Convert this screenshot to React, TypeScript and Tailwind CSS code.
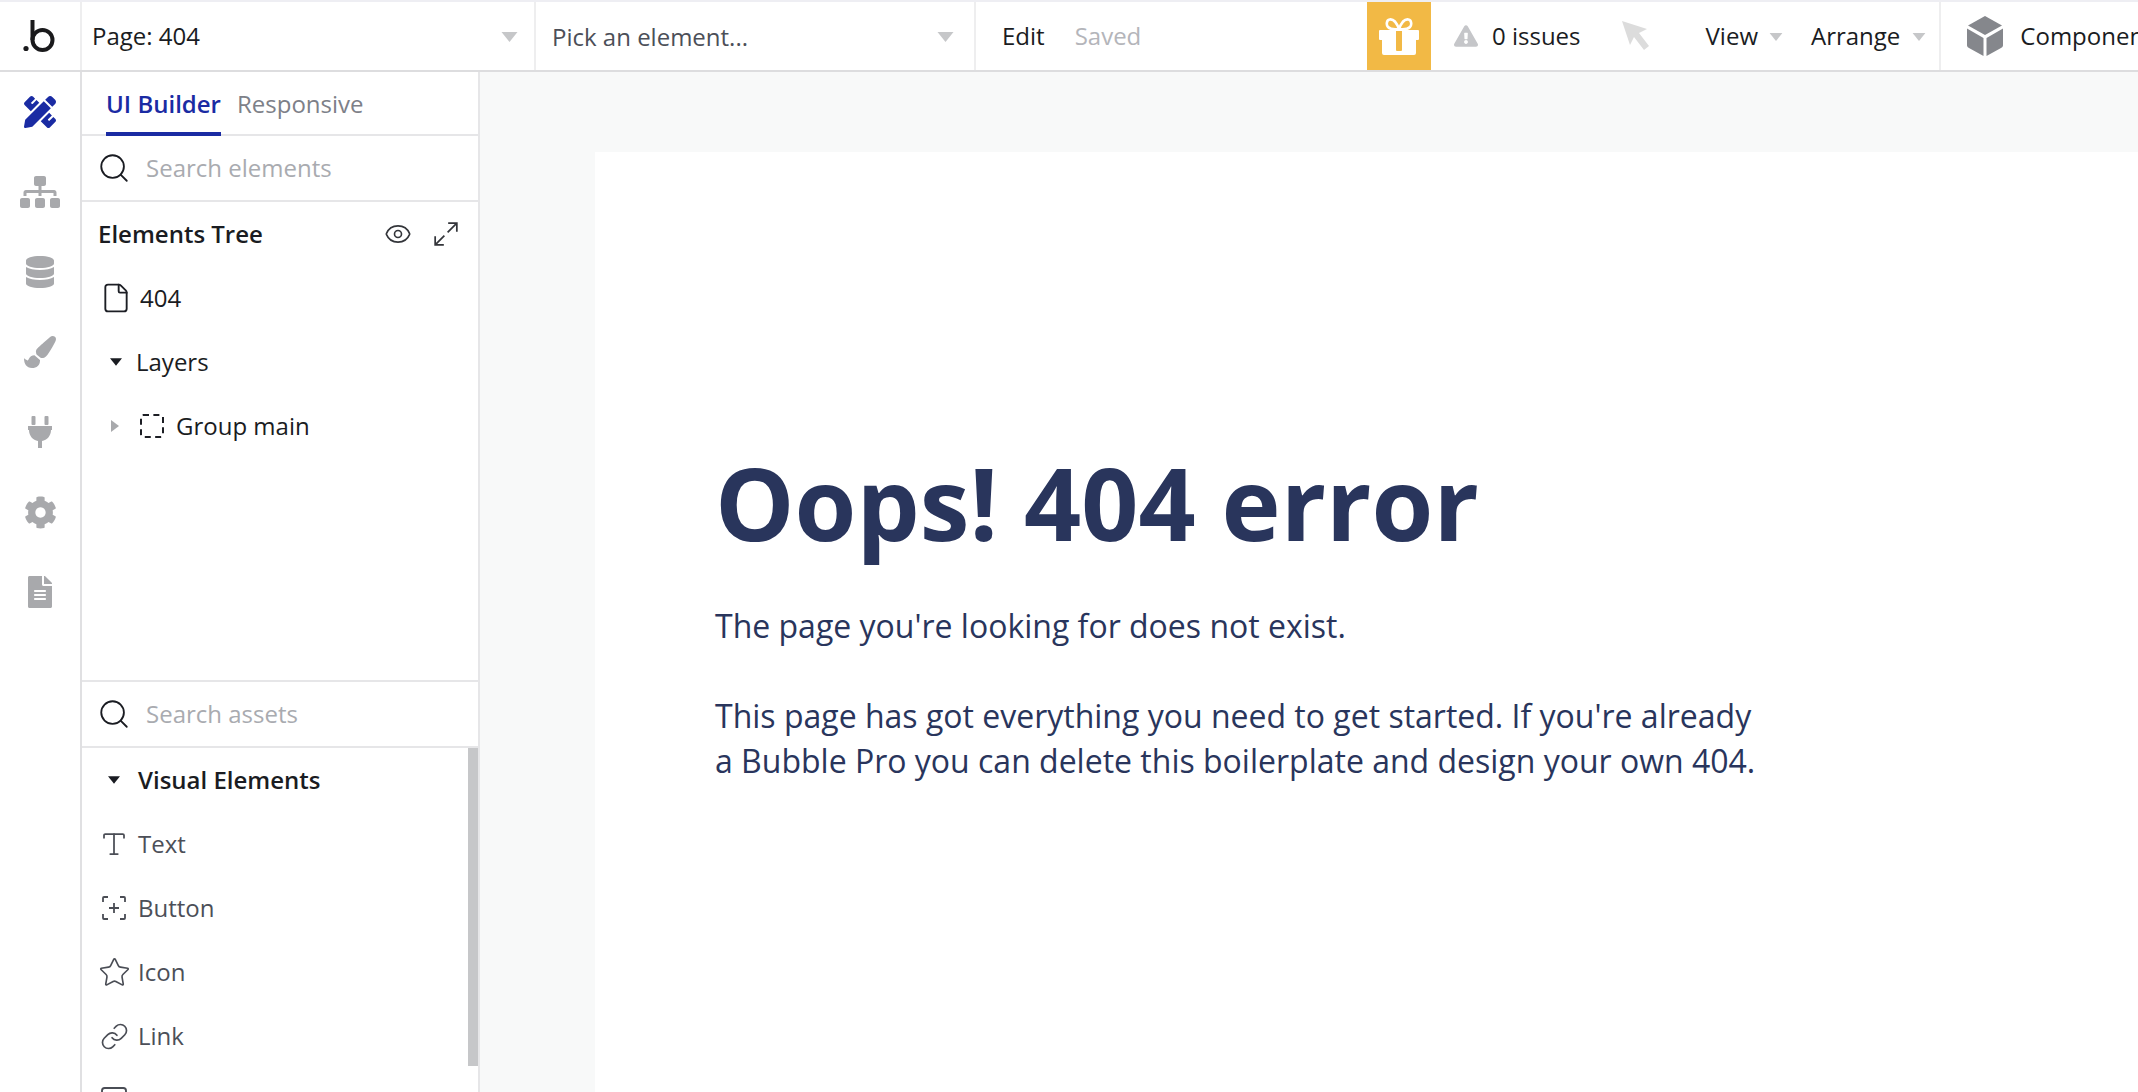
import React from "react";
import { FaPencilRuler, FaSitemap, FaDatabase, FaPaintBrush, FaCog, FaFileAlt, FaExclamationTriangle } from "react-icons/fa";
import { Search, Eye, File, Type, Star, Link, Image } from "lucide-react";

function Caret({ className }: { className: string }) {
  return (
    <svg viewBox="0 0 16 10" className={`${className} shrink-0`} fill="currentColor">
      <path d="M0 0h16L8 10z" />
    </svg>
  );
}

function Logo() {
  return (
    <svg viewBox="0 0 32 34" className="w-[32px] h-[34px]" fill="none">
      <circle cx="3" cy="29.5" r="2.6" fill="#1a1a1c" />
      <path d="M9.5 1v20" stroke="#1a1a1c" strokeWidth="4" />
      <circle cx="19.5" cy="21" r="10" stroke="#1a1a1c" strokeWidth="4" />
    </svg>
  );
}

function Gift() {
  return (
    <svg viewBox="0 0 40 37" className="w-[40px] h-[37px] shrink-0">
      <path d="M20 11C17 3 13 1 10.500 1.500 7.500 2 7 7 9 9c2 2 7 2.500 11 2zm0 0c3-8 7-10 9.500-9.500C32.500 2 33 7 31 9c-2 2-7 2.500-11 2z" fill="none" stroke="#fff" strokeWidth="2.600" />
      <path d="M1 12h38a1 1 0 0 1 1 1v8a1 1 0 0 1-1 1h-2v13a2 2 0 0 1-2 2H5a2 2 0 0 1-2-2V22H1a1 1 0 0 1-1-1v-8a1 1 0 0 1 1-1z" fill="#fff" />
      <path d="M17 13h6v19a1 1 0 0 1-1 1h-4a1 1 0 0 1-1-1z" fill="#f2b945" />
    </svg>
  );
}

function Plug() {
  return (
    <svg viewBox="0 0 24 32" className="w-[24px] h-[32px]" fill="#a8a9ac">
      <rect x="3.500" y="0" width="4" height="9" rx="1" />
      <rect x="16.500" y="0" width="4" height="9" rx="1" />
      <path d="M0 10h24v4h-1c0 6-4 10-9 11v7h-4v-7C5 24 1 20 1 14H0z" />
    </svg>
  );
}

function Cube() {
  return (
    <svg viewBox="0 0 36 40" className="w-[36px] h-[40px] shrink-0" fill="#85878c">
      <path d="M18 0 35 9.500 18 19 1 9.500z" />
      <path d="M0 12.500 16.500 22v18L2 32a3 3 0 0 1-2-3z" />
      <path d="M36 12.500 19.500 22v18L34 32a3 3 0 0 0 2-3z" />
    </svg>
  );
}

function Pointer() {
  return (
    <svg viewBox="0 0 28 30" className="w-[28px] h-[30px] shrink-0" fill="#dcdcdc">
      <path d="M0 0 25 8 17 12 27 25 22 29 12 16 8 24z" />
    </svg>
  );
}

function Expand() {
  return (
    <svg viewBox="0 0 24 24" className="w-[26px] h-[26px] shrink-0" fill="none" stroke="#33353a" strokeWidth="1.600">
      <path d="M14 2h8v8M22 2 13.500 10.500M10 22H2v-8M2 22l8.500-8.500" />
    </svg>
  );
}

function DashedSquare() {
  return <div className="w-[24px] h-[24px] rounded-[3px] border-2 border-dashed border-[#1c1e24]" />;
}

function ButtonIcon() {
  return (
    <svg viewBox="0 0 24 24" className="w-[24px] h-[24px] shrink-0" fill="none" stroke="#4a4d55" strokeWidth="1.800">
      <path d="M1 6V2a1 1 0 0 1 1-1h4M18 1h4a1 1 0 0 1 1 1v4M23 18v4a1 1 0 0 1-1 1h-4M6 23H2a1 1 0 0 1-1-1v-4M12 7v10M7 12h10" />
    </svg>
  );
}

const railIcons = [
  <FaPencilRuler className="text-[#1a2ba3] w-[32px] h-[32px]" />,
  <FaSitemap className="text-[#a8a9ac] w-[40px] h-[32px]" />,
  <FaDatabase className="text-[#a8a9ac] w-[28px] h-[32px]" />,
  <FaPaintBrush className="text-[#a8a9ac] w-[32px] h-[32px]" />,
  <Plug />,
  <FaCog className="text-[#a8a9ac] w-[33px] h-[33px]" />,
  <FaFileAlt className="text-[#a8a9ac] w-[24px] h-[32px]" />,
];

function AssetRow({ icon, label }: { icon: React.ReactNode; label: string }) {
  return (
    <div className="h-[64px] flex items-center shrink-0">
      <div className="w-[24px] ml-[20px] flex justify-center">{icon}</div>
      <span className="ml-[12px] text-[#4c4f58]">{label}</span>
    </div>
  );
}

export default function App() {
  return (
    <div
      className="w-full h-screen overflow-hidden flex flex-col bg-white text-[24px] leading-[32px] text-[#1a1c22]"
      style={{ fontFamily: '"Open Sans", sans-serif' }}
    >
      <div className="h-[2px] bg-[#eeeef3] shrink-0" />
      <header className="h-[70px] shrink-0 flex border-b-2 border-[#dddddf] whitespace-nowrap overflow-hidden">
        <div className="w-[82px] shrink-0 border-r-2 border-[#eeeeef] flex items-center justify-center pr-[3px]">
          <Logo />
        </div>
        <div className="w-[454px] shrink-0 border-r-2 border-[#eeeeef] flex items-center pl-[10px] pr-[16px] justify-between">
          <span>Page: 404</span>
          <Caret className="w-[17px] h-[10px] text-[#c6c7c9] mt-[2px]" />
        </div>
        <div className="w-[440px] shrink-0 border-r-2 border-[#eeeeef] flex items-center pl-[16px] pr-[20px] justify-between">
          <span className="text-[#4c4f58] pt-[1px]">Pick an element...</span>
          <Caret className="w-[17px] h-[10px] text-[#c6c7c9] mt-[2px]" />
        </div>
        <div className="w-[391px] shrink-0 flex items-center pl-[26px] gap-[30px]">
          <span>Edit</span>
          <span className="text-[#b4b5ba]">Saved</span>
        </div>
        <div className="w-[64px] shrink-0 bg-[#f2b945] flex items-center justify-center">
          <Gift />
        </div>
        <div className="flex-1 min-w-0 flex items-center">
          <FaExclamationTriangle className="w-[24px] h-[24px] shrink-0 text-[#c5c6c9] ml-[23px]" />
          <span className="ml-[14px]">0 issues</span>
          <div className="ml-[41px] shrink-0"><Pointer /></div>
          <span className="ml-[56px]">View</span>
          <Caret className="w-[14px] h-[8px] text-[#c6c7c9] ml-[11px] mt-[2px]" />
          <span className="ml-[28px]">Arrange</span>
          <Caret className="w-[14px] h-[8px] text-[#c6c7c9] ml-[12px] mt-[2px]" />
          <div className="ml-[13px] w-[2px] self-stretch bg-[#eeeeef] shrink-0" />
          <div className="ml-[26px] shrink-0"><Cube /></div>
          <span className="ml-[17px]">Component</span>
        </div>
      </header>

      <div className="flex-1 flex min-h-0">
        <nav className="w-[82px] shrink-0 border-r-2 border-[#e0e0e2] flex flex-col">
          {railIcons.map((icon, i) => (
            <div key={i} className="h-[80px] shrink-0 flex items-center justify-center">
              {icon}
            </div>
          ))}
        </nav>

        <aside className="w-[398px] shrink-0 border-r-2 border-[#e6e6e8] flex flex-col relative overflow-hidden">
          <div className="h-[64px] shrink-0 border-b-2 border-[#e6e6e8] flex pl-[24px] gap-[16px]">
            <div className="h-[64px] pt-[16px] border-b-4 border-[#1a2ba3] text-[#1a2ba3] font-semibold">UI Builder</div>
            <div className="pt-[16px] text-[#7d8088]">Responsive</div>
          </div>
          <div className="h-[66px] shrink-0 border-b-2 border-[#e6e6e8] flex items-center pl-[15px]">
            <Search className="w-[34px] h-[34px] text-[#1a1c22] shrink-0" strokeWidth={1.3} />
            <span className="ml-[15px] text-[#a9abb0]">Search elements</span>
          </div>
          <div className="h-[64px] shrink-0 flex items-center pl-[16px] pr-[19px] justify-between">
            <span className="font-semibold">Elements Tree</span>
            <div className="flex items-center gap-[21px]">
              <Eye className="w-[28px] h-[28px] text-[#33353a] shrink-0" strokeWidth={1.4} />
              <Expand />
            </div>
          </div>
          <div className="h-[64px] shrink-0 flex items-center pl-[18px]">
            <File className="w-[32px] h-[32px] text-[#1c1e24] shrink-0" strokeWidth={1.4} />
            <span className="ml-[8px]">404</span>
          </div>
          <div className="h-[64px] shrink-0 flex items-center pl-[28px]">
            <Caret className="w-[12px] h-[8px] text-[#1a1c22]" />
            <span className="ml-[14px] font-medium">Layers</span>
          </div>
          <div className="h-[64px] shrink-0 flex items-center pl-[29px]">
            <svg viewBox="0 0 8 12" className="w-[8px] h-[12px] shrink-0" fill="#a8a9ac"><path d="M0 0l8 6-8 6z" /></svg>
            <div className="ml-[21px]"><DashedSquare /></div>
            <span className="ml-[12px]">Group main</span>
          </div>
          <div className="flex-1 min-h-0 border-b-2 border-[#e6e6e8]" />
          <div className="h-[66px] shrink-0 border-b-2 border-[#e6e6e8] flex items-center pl-[15px]">
            <Search className="w-[34px] h-[34px] text-[#1a1c22] shrink-0" strokeWidth={1.3} />
            <span className="ml-[15px] text-[#a9abb0]">Search assets</span>
          </div>
          <div className="h-[344px] shrink-0 flex flex-col overflow-hidden">
            <div className="h-[64px] shrink-0 flex items-center pl-[26px]">
              <Caret className="w-[12px] h-[8px] text-[#1a1c22]" />
              <span className="ml-[18px] font-semibold">Visual Elements</span>
            </div>
            <AssetRow icon={<Type className="w-[30px] h-[30px] text-[#4a4d55] shrink-0" strokeWidth={1.4} />} label="Text" />
            <AssetRow icon={<ButtonIcon />} label="Button" />
            <AssetRow icon={<Star className="w-[33px] h-[33px] text-[#4a4d55] shrink-0" strokeWidth={1.2} />} label="Icon" />
            <AssetRow icon={<Link className="w-[29px] h-[29px] text-[#4a4d55] shrink-0" strokeWidth={1.4} />} label="Link" />
            <AssetRow icon={<Image className="w-[32px] h-[32px] text-[#4a4d55] shrink-0" strokeWidth={1.4} />} label="Image" />
          </div>
          <div className="absolute right-0 top-[676px] w-[10px] h-[318px] bg-[#c6c7c9]" />
        </aside>

        <main className="flex-1 min-w-0 bg-[#f8f9f9] pl-[115px] pt-[80px]">
          <div className="h-full bg-white pl-[120px] pt-[286px] text-[#29355c]">
            <h1 className="text-[100px] leading-[128px] font-bold whitespace-nowrap">Oops! 404 error</h1>
            <div className="mt-[37px] text-[32px] leading-[45px] whitespace-nowrap">
              <p>The page you're looking for does not exist.</p>
              <p className="mt-[45px]">This page has got everything you need to get started. If you're already</p>
              <p>a Bubble Pro you can delete this boilerplate and design your own 404.</p>
            </div>
          </div>
        </main>
      </div>
    </div>
  );
}
